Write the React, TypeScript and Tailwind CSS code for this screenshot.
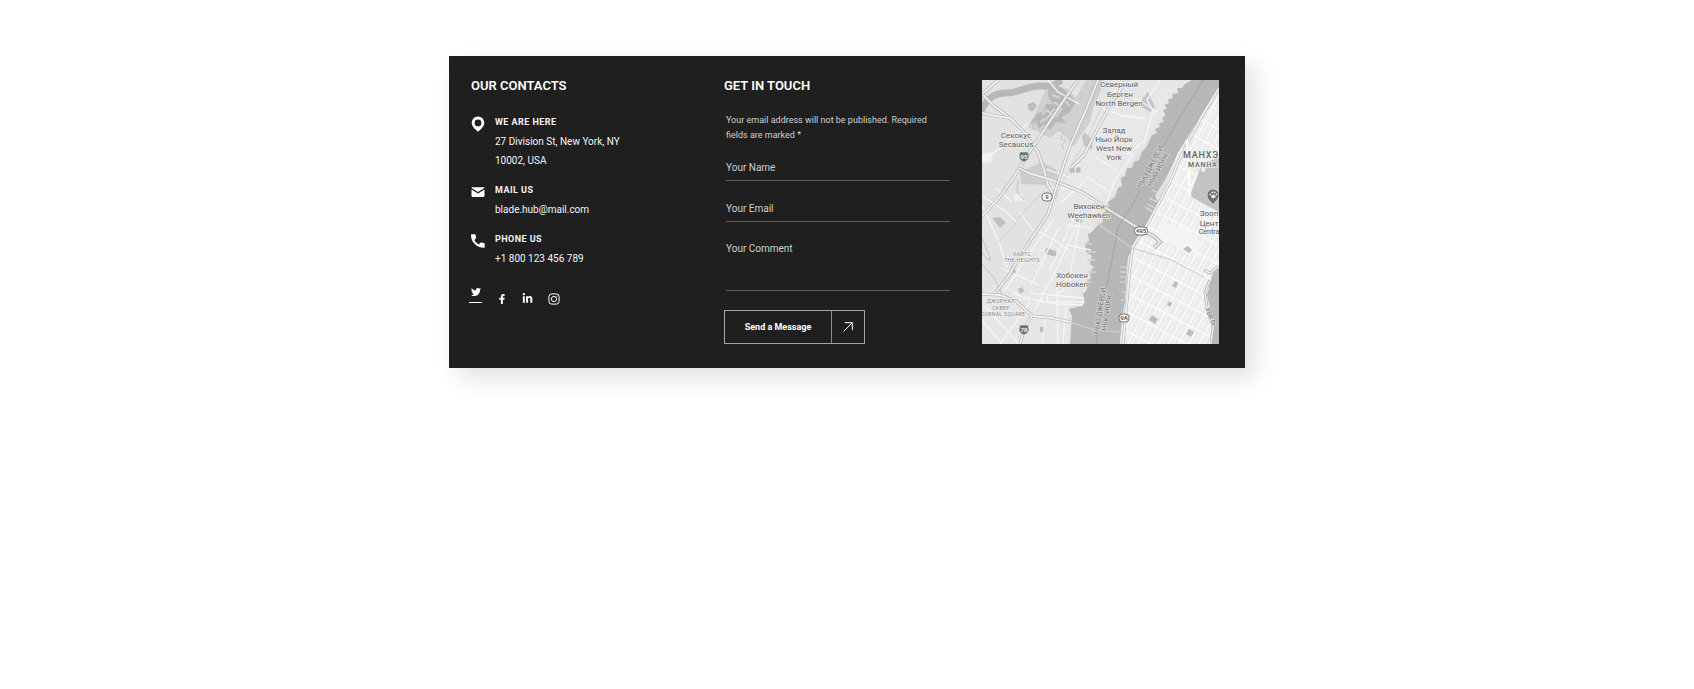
import { FaFacebookF, FaLinkedinIn, FaTwitter } from 'react-icons/fa';

const contacts = [
    { icon: 'pin', label: 'WE ARE HERE', lines: ['27 Division St, New York, NY', '10002, USA'] },
    { icon: 'mail', label: 'MAIL US', lines: ['blade.hub@mail.com'] },
    { icon: 'phone', label: 'PHONE US', lines: ['+1 800 123 456 789'] },
];

function ContactIcon({ name }: { name: string }) {
    if (name === 'pin') {
        return (
            <svg viewBox="0 0 14 16" className="h-4 w-3.5" fill="currentColor" aria-hidden="true">
                <path fillRule="evenodd" d="M7 .5a6.3 6.3 0 0 1 6.3 6.3c0 2.2-1.2 4-2.7 5.6L7 15.8l-3.6-3.4C1.900 10.800.7 9 .7 6.800A6.300 6.300 0 0 1 7 .5zm0 3a3.400 3.400 0 1 0 0 6.800 3.400 3.400 0 0 0 0-6.800z" />
            </svg>
        );
    }
    if (name === 'mail') {
        return (
            <svg viewBox="0 0 14 16" className="h-4 w-3.5" fill="currentColor" aria-hidden="true">
                <path d="M1.500 3.200h11c.7 0 1 .4 1 .9L7 8 .5 4.100c0-.5.3-.9 1-.9z" />
                <path d="M.5 5.500 7 9.400l6.500-3.900v6.300c0 .7-.4 1.100-1.100 1.100H1.600c-.7 0-1.100-.4-1.100-1.100z" />
            </svg>
        );
    }
    return (
        <svg viewBox="0 0 14 16" className="h-4 w-3.5" fill="currentColor" aria-hidden="true">
            <path d="M.8 1.300h3c.4 0 .7.300.8.700l.5 2.600c.1.300 0 .600-.2.800L3.300 7c1 1.900 2.500 3.400 4.400 4.400l1.600-1.600c.2-.2.5-.3.8-.2l2.900.5c.4.100.7.400.7.800v3c0 .5-.4.900-.9.900C5.800 14.800 0 9 0 2.200c0-.5.3-.9.8-.9z" />
        </svg>
    );
}

function Contacts() {
    return (
        <section className="w-[253px] shrink-0">
            <h2 className="text-[13px] leading-5 font-semibold">OUR CONTACTS</h2>
            <ul className="mt-[17px] flex flex-col gap-[11px]">
                {contacts.map(item => (
                    <li key={item.label} className="flex gap-[10px]">
                        <span className="pt-[3px]"><ContactIcon name={item.icon} /></span>
                        <div>
                            <h3 className="text-[9px] leading-[19px] font-bold tracking-wider text-gray-100">{item.label}</h3>
                            {item.lines.map(line => (
                                <p key={line} className="text-[10px] leading-[19px] text-gray-100">{line}</p>
                            ))}
                        </div>
                    </li>
                ))}
            </ul>
            <div className="mt-[19px] -ml-0.5 flex h-4 items-start">
                <a href="#twitter" aria-label="Twitter" className="flex h-4 w-[13px] flex-col items-center border-b border-white">
                    <FaTwitter className="size-[10px]" />
                </a>
                <a href="#facebook" aria-label="Facebook" className="ml-[15px] pt-[7px]"><FaFacebookF className="size-[10px]" /></a>
                <a href="#linkedin" aria-label="LinkedIn" className="ml-[15px] pt-[6px]"><FaLinkedinIn className="size-[11px]" /></a>
                <a href="#instagram" aria-label="Instagram" className="ml-[15px] pt-[6px]">
                    <svg viewBox="0 0 12 12" className="size-3" fill="none" stroke="currentColor">
                        <rect x=".9" y=".9" width="10.200" height="10.200" rx="2.800" />
                        <circle cx="6" cy="6" r="2.600" />
                        <circle cx="8.900" cy="3.100" r=".3" strokeWidth=".6" />
                    </svg>
                </a>
            </div>
        </section>
    );
}

function ContactForm() {
    const field = 'block w-full border-b border-[#5c5c5c] bg-transparent text-[10px] text-gray-200 outline-none placeholder:text-[#cfcfcf]';

    return (
        <section className="w-[258px] shrink-0">
            <h2 className="text-[13px] leading-5 font-semibold">GET IN TOUCH</h2>
            <form onSubmit={e => e.preventDefault()}>
                <div className="mt-[17px] mr-8 ml-0.5">
                    <p className="text-[9px] leading-[15px] text-[#cfcfcf]">
                        Your email address will not be published. Required fields are marked *
                    </p>
                    <input type="text" aria-label="Your Name" placeholder="Your Name" className={`${field} mt-[13px] h-[25px] pb-0.5`} />
                    <input type="email" aria-label="Your Email" placeholder="Your Email" className={`${field} mt-4 h-[25px] pb-0.5`} />
                    <textarea aria-label="Your Comment" placeholder="Your Comment" className={`${field} mt-[19px] h-[50px] resize-none leading-[15px]`} />
                </div>
                <button type="submit" className="mt-[19px] flex h-[34px] w-[141px] items-stretch border border-[#a5a5a5]">
                    <span className="flex grow items-center justify-center border-r border-[#8a8a8a] pt-0.5 text-[9px] font-bold">Send a Message</span>
                    <span className="flex w-8 items-center justify-center">
                        <svg viewBox="0 0 10 10" className="size-[10px]" fill="none" stroke="currentColor" aria-hidden="true">
                            <path d="M.5 9.500 9.300.7M1.800.7h7.500v7.500" />
                        </svg>
                    </span>
                </button>
            </form>
        </section>
    );
}

// outlines of the two rivers, in map units
const hudson = 'M210 0 203 4 200 8 195 8 196 13 190 14 191 18 186 19 187 23 182 25 185 28 181 31 184 35 180 38 182 42 177 43 178 47 173 49 175 53 170 55 165 66 160 72 157 80 152 82 150 88 145 88 143 96 139 98 140 106 136 108 133 117 126 122 127 129 120 134 121 142 115 146 110 152 106 154 107 161 103 164 104 172 110 176 108 184 112 187 108 192 109 198 104 202 105 210 101 214 103 222 100 226 87 229 90 236 88 264 138 264 140 238 143 222 145 198 146 178 151 165 166 143 177 125 173 116 184 98 196 73 205 62 213 47 228 27 237 7V0Z';
const eastRiver = 'M237 188 231 193 228 203 225 215 228 228 232 240 229 264H237Z';
const manhattan = 'M212 47 228 27 237 7V188L228 203 225 215 232 240 229 264H138L143 222 146 178 166 143 177 125 196 73Z';

const highways = [
    'M0 14 12 26 28 38 42 52 50 64 56 72 62 90 66 106 75 118',
    'M96 0 84 17 70 38 57 58 44 77 32 97 17 118 0 136',
    'M0 33 14 36 28 38',
    'M0 14 14 2 17 0',
    'M36 88 50 94 70 100 100 112 122 126',
    'M116 0 104 30 88 66 78 96 71 118 66 134 54 152 39 174 26 197 14 212',
    'M145 0 130 22 117 46 102 75 89 88',
    'M0 214 18 215 34 221 50 236 70 238 88 242',
    'M50 236 43 247 38 264',
];
const roads = [
    'M0 82 18 68 45 44', 'M14 108 30 122', 'M30 40 46 57', 'M0 116 22 130 34 142', 'M60 88 75 93 89 98',
    'M66 0 76 12 97 24', 'M38 132 50 149 70 158 89 172', 'M66 108 90 108 112 122', 'M68 190 88 147 97 127',
    'M22 212 47 174 72 139', 'M49 205 66 170 77 147', 'M53 230 74 190 93 150', 'M65 216 66 222 102 222',
    'M75 208 76 264', 'M84 165 109 170', 'M84 145 109 148', 'M99 134 86 205 76 214', 'M19 188 57 205',
    'M3 226 37 264', 'M18 264 48 222', 'M0 240 20 264', 'M48 213 102 218', 'M64 237 60 264',
    'M0 125 17 162 25 188', 'M30 212 42 218 75 224 101 225', 'M84 227 81 264', 'M103 101 80 122',
    'M120 28 142 36 163 38', 'M178 0 165 20 171 31 163 60 145 75', 'M131 10 157 20 175 32',
    'M112 76 136 91', 'M104 96 128 112', 'M146 68 150 76 143 86 133 100 125 122',
];

type Label = [string, number, number, number];

const places: Label[] = [
    ['Северный', 137, 7, 8], ['Берген', 138, 17, 8], ['North Bergen', 137, 26, 8],
    ['Секокус', 34, 58, 8], ['Secaucus', 34, 67, 8],
    ['Запад', 132, 53, 8], ['Нью Йорк', 132, 62, 8], ['West New', 132, 71, 8], ['York', 132, 80, 8],
    ['Вихокен', 107, 129, 8], ['Weehawken', 107, 138, 8],
    ['Хобокен', 90, 198, 8], ['Hoboken', 90, 207, 8],
    ['Зооп', 227, 136, 8], ['Цент', 227, 146, 8], ['Centra', 227, 154, 7],
];
const districts: Label[] = [
    ['ХАЙТС', 40, 176, 5], ['THE HEIGHTS', 40, 182, 5],
    ['ДЖОРНАЛ', 19, 223, 5], ['СКВЕР', 19, 230, 5], ['OURNAL SQUARE', 21, 236, 5],
];

function Shield({ x, y, label, wide }: { x: number; y: number; label: string; wide?: boolean }) {
    const w = wide ? 13 : 10;
    return (
        <g>
            <rect x={x - w / 2} y={y - 4} width={w} height="8" rx="3.500" fill="#f7f7f7" stroke="#707070" />
            <text x={x} y={y + 2} fontSize="6" fontWeight="700" textAnchor="middle" fill="#666">{label}</text>
        </g>
    );
}

function Interstate({ x, y, label }: { x: number; y: number; label: string }) {
    return (
        <g>
            <path d={`M${x - 4} ${y - 5}h8l1 4c0 3-2 5-5 6-3-1-5-3-5-6z`} fill="#707070" stroke="#f0f0f0" strokeWidth=".5" />
            <text x={x} y={y + 2} fontSize="6" fontWeight="700" textAnchor="middle" fill="#f2f2f2">{label}</text>
        </g>
    );
}

function CityMap() {
    return (
        <svg viewBox="0 0 237 264" className="block h-[264px] w-full bg-[#e2e2e2]" preserveAspectRatio="xMidYMid slice" role="img" aria-label="Map of New York and New Jersey">
            <defs>
                <pattern id="manhattan" width="9" height="17" patternUnits="userSpaceOnUse" patternTransform="rotate(28)">
                    <path d="M0 0V17M0 0H9" stroke="#fdfdfd" strokeWidth="2.400" />
                    <path d="M4.500 0V17" stroke="#f7f7f7" strokeWidth=".8" />
                </pattern>
                <pattern id="blocks" width="4" height="7" patternUnits="userSpaceOnUse" patternTransform="rotate(32)">
                    <path d="M0 0V7M0 0H4" stroke="#efefef" strokeWidth=".9" />
                </pattern>
            </defs>

            {/* land */}
            <path d="M104 30 130 0H208L170 55 145 88 127 122 103 164 108 192 88 229V264H0V215L26 197 66 134 78 96Z" fill="#e6e6e6" />
            <path d="M119 31 148 34 164 40 160 65 140 86 120 122 85 106 100 76Z" fill="url(#blocks)" />
            <path d="M178 10 196 8 170 50 163 52Z" fill="url(#blocks)" />
            <path d="M60 145 100 145 90 216 65 222 50 200Z" fill="url(#blocks)" opacity=".5" />

            {/* meadows and the Hackensack */}
            <path d="M65 7 85 8 94 18 104 0H118L108 42 92 66 78 50 68 58 46 47 53 34Z" fill="#d0d0d0" />
            <path d="M102 45 115 20 122 0H110Z" fill="#cccccc" />
            <path d="M67 7 79 7 88 15 94 22 87 33 79 37 84 43 74 42 68 50 62 44 57 49 54 42 48 44 55 34 62 31 64 24 71 24 66 16Z" fill="#b8b8b8" />
            <path d="M60 35l5-5 3 3 5-4M62 41l7-7 5 3 6-9M58 43l4-5M71 22l6 3 6-4 5 5M70 15l8 3" fill="none" stroke="#dadada" strokeWidth="1.500" />
            <path d="M46 24 52 22 55 26 50 32 46 29Z" fill="#bcbcbc" />
            <path d="M-2 34C4 18 12 13 25 13S45 5 60 6s15-4 20-6" fill="none" stroke="#b8b8b8" strokeWidth="7" />
            <path d="M38 92 60 82 75 90 76 101 65 98 66 105 39 104Z" fill="#cdcdcd" />
            <path d="M102 52 111 60 110 70 102 66 100 58Z" fill="#c5c5c5" />
            <path d="M161 18 166 12 173 27 168 32 158 26Z" fill="#c6c6c6" />
            <path d="M10 138 18 137 24 143 18 148Z" fill="#c0c0c0" />
            <path d="M64 168 74 171 75 177 63 174Z" fill="#bdbdbd" />
            <path d="M28 191l5-2 1 4-4 2zM36 209l4-2 2 4-4 3zM87 88l5-1 1 5-5 1zM94 88l4-1 1 5-5 1zM58 247h5v5h-5zM94 138l7 2-2 3-6-2z" fill="#bdbdbd" />
            <path d="M0 74 11 72 10 82 3 84 0 80ZM32 114h9v7h-9z" fill="#f0f0f0" />

            {/* water */}
            <path d={hudson} fill="#b7b7b7" />
            <path d={manhattan} fill="#ececec" />
            <path d={manhattan} fill="url(#manhattan)" />
            <path d="M220 83 237 78V132L224 125 208 116Z" fill="#c3c3c3" />
            <path d="M220 84 225 82 223 92 219 91Z" fill="#ededed" />
            <path d="M178 142 203 148 222 165 210 175 190 164 172 158Z" fill="#f5f5f5" opacity=".8" />
            <path d={eastRiver} fill="#b8b8b8" />
            <path d="M206 166 210 170 207 173 201 169Z M193 201 196 203 194 208 190 206Z M187 221 190 223 188 227 185 225Z M170 235 176 239 173 244 167 240Z M207 249 212 252 209 257 204 254Z" fill="#bcbcbc" />

            {/* piers */}
            <path d="M138 187h8M138 192h8M138 197h8M138 202h8M140 212h5M139 220h5M163 127l8 5M165 124l8 4M170 110l9 4M167 118l8 4" stroke="#dedede" strokeWidth="1.200" />
            <path d="M103 164h7M104 172h10M105 180h8M106 192h8M103 202h6" stroke="#d5d5d5" strokeWidth="1.500" />

            {/* local roads, then cased highways */}
            {roads.map(d => <path key={d} d={d} fill="none" stroke="#f6f6f6" strokeWidth="1.300" />)}
            <path d="M51 50 51 44 55 40M76 49 81 53 79 59 84 61 80 65 82 70M0 158 5 170 9 180 4 178 0 172M0 184 12 198 20 214M36 99 35 112 42 120" fill="none" stroke="#c4c4c4" />
            <path d="M119 29 103 62 90 84 73 118M17 162 26 152 43 131 59 114" fill="none" stroke="#cdcdcd" strokeWidth=".8" />
            {highways.map(d => (
                <g key={d} fill="none">
                    <path d={d} stroke="#b2b2b2" strokeWidth="3.200" />
                    <path d={d} stroke="#f0f0f0" strokeWidth="1.900" />
                </g>
            ))}
            <path d="M237 8 220 36 214 47 198 78 188 102 178 121 165 145 151 166 148 185 145 220 141 264" fill="none" stroke="#b5b5b5" strokeWidth="3" />
            <path d="M237 8 220 36 214 47 198 78 188 102 178 121 165 145 151 166 148 185 145 220 141 264" fill="none" stroke="#f1f1f1" strokeWidth="1.800" />
            <path d="M110 126 124 128 145 141 158 149 173 157 178 162 172 168" fill="none" stroke="#a5a5a5" strokeWidth="4" />
            <path d="M110 126 124 128 145 141 158 149 173 157 178 162 172 168" fill="none" stroke="#e3e3e3" strokeWidth="2.600" />
            <path d="M115 143 150 168 190 180 222 197M88 242 112 250 138 252" fill="none" stroke="#d0d0d0" strokeWidth="1.200" />
            <path d="M237 186 228 193 222 190M228 200 223 212 225 228 232 240 229 264" fill="none" stroke="#aaa" strokeWidth="2.800" />
            <path d="M237 186 228 193 222 190M228 200 223 212 225 228 232 240 229 264" fill="none" stroke="#eee" strokeWidth="1.500" />
            <path d="M205 60 207 95 208 117" fill="none" stroke="#fafafa" strokeWidth="2.500" />
            <path d="M221 0 195 42 172 83 151 124 136 147 130 180 121 222 114 264" fill="none" stroke="#8f8f8f" strokeWidth=".8" strokeDasharray="2 1.200" />

            {/* river names */}
            <g fontSize="7" fill="#777" stroke="#d4d4d4" strokeWidth="1.500" paintOrder="stroke" textAnchor="middle">
                <text transform="translate(170 88) rotate(-61)">НЬЮ-ДЖЕРСИ</text>
                <text transform="translate(178 91) rotate(-61)">НЬЮ-ЙОРК</text>
                <text transform="translate(120 231) rotate(-81)">НЬЮ-ДЖЕРСИ</text>
                <text transform="translate(127 233) rotate(-81)">НЬЮ-ЙОРК</text>
                <text transform="translate(227 238) rotate(68)" fontSize="6">FDR Dr</text>
            </g>

            <g textAnchor="middle" fill="#606060" stroke="#efefef" strokeWidth="1.500" strokeLinejoin="round" paintOrder="stroke">
                {places.map(([name, x, y, size]) => <text key={name} x={x} y={y} fontSize={size}>{name}</text>)}
                {districts.map(([name, x, y, size]) => <text key={name} x={x} y={y} fontSize={size} fill="#858585" letterSpacing=".4">{name}</text>)}
            </g>
            <g fill="#666" stroke="#f0f0f0" strokeWidth="1.500" paintOrder="stroke" letterSpacing=".8">
                <text x="201" y="78" fontSize="9" fontWeight="500">МАНХЭ</text>
                <text x="206" y="87" fontSize="7" fontWeight="500">MANHA</text>
            </g>

            <Interstate x={42} y={77} label="95" />
            <Interstate x={42} y={250} label="78" />
            <Shield x={65} y={117} label="9" />
            <Shield x={159} y={151} label="495" wide />
            <Shield x={142} y={238} label="9A" />

            {/* zoo marker */}
            <path d="M231 125c-1-3-6-5-6-10a6 6 0 0 1 12 0c0 5-5 7-6 10z" fill="#707070" stroke="#ededed" strokeWidth=".6" />
            <g fill="#f5f5f5">
                <ellipse cx="231.300" cy="116.500" rx="2.300" ry="1.800" />
                <circle cx="228.200" cy="114.300" r=".9" />
                <circle cx="230.200" cy="112.400" r=".9" />
                <circle cx="232.600" cy="112.400" r=".9" />
                <circle cx="234.500" cy="114.300" r=".9" />
            </g>
        </svg>
    );
}

export default function App() {
    return (
        <main className="min-h-screen bg-white px-4 py-14 font-[Roboto,sans-serif]">
            <div className="mx-auto flex max-w-[796px] bg-[#1f1f1f] pr-[26px] pb-6 pl-[22px] text-white shadow-[10px_10px_22px_rgba(0,0,0,0.12)]">
                <div className="flex shrink-0 pt-5">
                    <Contacts />
                    <ContactForm />
                </div>
                <div className="min-w-0 grow pt-6">
                    <CityMap />
                </div>
            </div>
        </main>
    );
}
